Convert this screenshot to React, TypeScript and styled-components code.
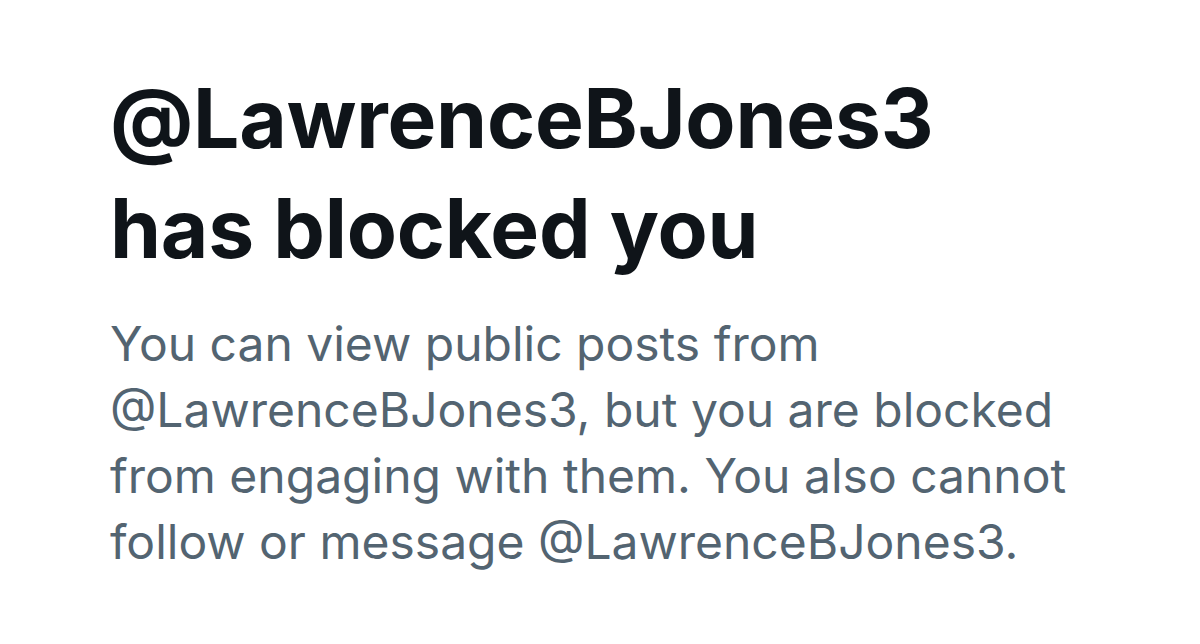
import React from "react";
import styled, { createGlobalStyle } from "styled-components";

const Global = createGlobalStyle`
  html, body { margin: 0; padding: 0; background: #ffffff; }
  body { font-family: Inter, "Liberation Sans", sans-serif; }
`;

const Page = styled.main`
  width: 1200px;
  height: 644px;
  box-sizing: border-box;
  padding: 64px 0 0 110px;
  background: #ffffff;
  display: flex;
  flex-direction: column;
  gap: 27px;
`;

const Title = styled.h1`
  margin: 0;
  font-family: Inter, "Liberation Sans", sans-serif;
  font-weight: 700;
  font-size: 82px;
  line-height: 110px;
  letter-spacing: -0.2px;
  color: #0f1419;
`;

const Body = styled.p`
  margin: 0;
  font-family: Inter, "Liberation Sans", sans-serif;
  font-weight: 400;
  font-size: 48px;
  line-height: 66px;
  color: #536471;
`;

export default function App() {
  return (
    <>
      <Global />
      <Page>
        <Title>
          @LawrenceBJones3
          <br />
          has blocked you
        </Title>
        <Body>
          You can view public posts from
          <br />
          @LawrenceBJones3, but you are blocked
          <br />
          from engaging with them. You also cannot
          <br />
          follow or message @LawrenceBJones3.
        </Body>
      </Page>
    </>
  );
}
